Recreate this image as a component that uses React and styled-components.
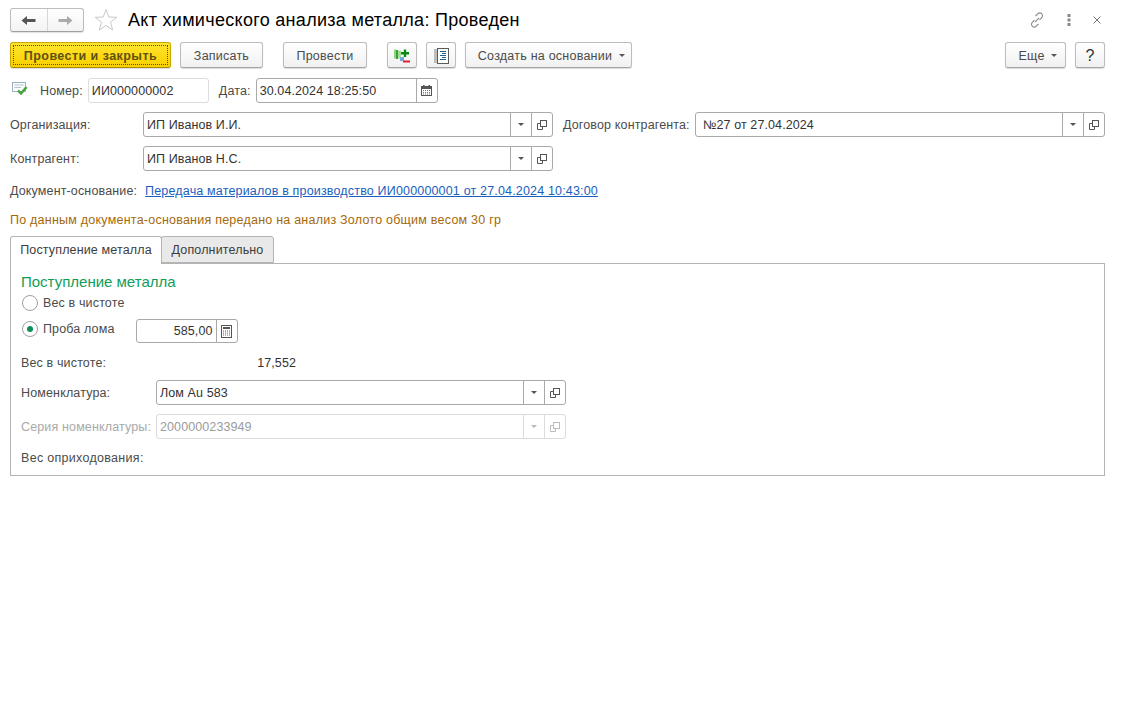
import React from "react";
import styled, { createGlobalStyle } from "styled-components";

const GlobalStyle = createGlobalStyle`
  html, body { margin: 0; padding: 0; background: #fff; }
  body {
    font-family: "Liberation Sans", Arial, sans-serif;
    font-size: 12.5px;
    color: #4b4b4b;
    letter-spacing: 0.23px;
  }
`;

const Page = styled.div`
  width: 1095px;
  padding: 8px 19px 0 10px;
  min-height: 695px;
  position: relative;
`;

const Header = styled.header`
  display: flex;
  align-items: center;
  height: 24px;
`;

const NavGroup = styled.div`
  display: flex;
  width: 74px;
  height: 24px;
  box-sizing: border-box;
  border: 1px solid #bdbdbd;
  border-bottom-color: #a0a0a0;
  border-radius: 3px;
  background: linear-gradient(#fff, #f3f3f3);
  box-shadow: 0 1px 1px rgba(0, 0, 0, 0.12);
`;

const NavCell = styled.div`
  flex: 1;
  display: flex;
  align-items: center;
  justify-content: center;
  & + & { border-left: 1px solid #d6d6d6; }
`;

const StarBox = styled.div`
  display: flex;
  margin-left: 10px;
`;

const Title = styled.h1`
  margin: 1px 0 0 10px;
  font-size: 18px;
  font-weight: 400;
  color: #000;
  letter-spacing: 0.3px;
  white-space: nowrap;
`;

const HeaderTools = styled.div`
  margin-left: auto;
  margin-right: 4px;
  display: flex;
  align-items: center;
  gap: 22px;
`;

const Toolbar = styled.div`
  display: flex;
  height: 26px;
  margin-top: 10px;
`;

const Button = styled.button`
  box-sizing: border-box;
  width: ${(p) => p.$w}px;
  height: 26px;
  margin-left: ${(p) => p.$ml || 0}px;
  padding: 1px 0 0 ${(p) => p.$pl || 0}px;
  display: flex;
  align-items: center;
  justify-content: center;
  font: inherit;
  letter-spacing: inherit;
  color: #4b4b4b;
  border: 1px solid #bcbcbc;
  border-bottom-color: #a4a4a4;
  border-radius: 3px;
  background: linear-gradient(#fff, #f1f1f1);
  box-shadow: 0 1px 1px rgba(0, 0, 0, 0.14);
`;

const PrimaryButton = styled(Button)`
  position: relative;
  font-weight: 700;
  letter-spacing: 0.45px;
  color: #5f5010;
  border-color: #c9a800;
  border-bottom-color: #a88e00;
  background: linear-gradient(#ffe52e, #f9d000);
  &::after {
    content: "";
    position: absolute;
    inset: 2px;
    border: 1px dotted #3a3fa0;
  }
`;

const Caret = styled.span`
  width: 0;
  height: 0;
  margin-left: ${(p) => p.$ml || 0}px;
  border-left: 3px solid transparent;
  border-right: 3px solid transparent;
  border-top: 3px solid ${(p) => (p.$muted ? "#b8b8b8" : "#555")};
`;

const Spacer = styled.div`
  flex: 1;
`;

const HelpMark = styled.span`
  font-size: 16px;
  color: #333;
  letter-spacing: 0;
`;

const Row = styled.div`
  display: flex;
  align-items: center;
  height: ${(p) => p.$h || 25}px;
  margin-top: ${(p) => p.$mt || 0}px;
  white-space: nowrap;
`;

const Label = styled.span`
  width: ${(p) => (p.$w ? `${p.$w}px` : "auto")};
  flex: none;
  margin-left: ${(p) => p.$ml || 0}px;
  letter-spacing: ${(p) => (p.$wide ? 0.3 : 0.14)}px;
  color: ${(p) => (p.$muted ? "#a9a9a9" : "#4b4b4b")};
`;

const FieldBox = styled.div`
  box-sizing: border-box;
  display: flex;
  flex: none;
  width: ${(p) => p.$w}px;
  height: ${(p) => p.$h || 25}px;
  margin-left: ${(p) => p.$ml || 0}px;
  border: 1px solid ${(p) => (p.$light ? "#dcdcdc" : "#a9a9a9")};
  border-radius: 3px;
  background: #fff;
`;

const FieldValue = styled.div`
  flex: 1;
  min-width: 0;
  padding: 0 3px 0 ${(p) => (p.$right ? 0 : p.$inset || 3)}px;
  line-height: ${(p) => (p.$h || 25) - 1}px;
  letter-spacing: 0.1px;
  text-align: ${(p) => (p.$right ? "right" : "left")};
  color: ${(p) => (p.$muted ? "#9b9b9b" : "#333")};
`;

const FieldButton = styled.div`
  box-sizing: border-box;
  flex: none;
  width: ${(p) => p.$w || 21}px;
  display: flex;
  align-items: center;
  justify-content: center;
  border-left: 1px solid ${(p) => (p.$light ? "#dcdcdc" : "#a9a9a9")};
`;

const DocLink = styled.a`
  margin-left: 8px;
  color: #1a5fc0;
  letter-spacing: 0.17px;
  text-decoration: underline;
`;

const Notice = styled.div`
  margin-top: 15px;
  height: 14px;
  line-height: 14px;
  color: #a5690a;
`;

const TabStrip = styled.div`
  display: flex;
  align-items: flex-end;
  height: 28px;
  margin-top: 9px;
  margin-bottom: -1px;
  position: relative;
`;

const Tab = styled.div`
  box-sizing: border-box;
  width: ${(p) => p.$w}px;
  height: ${(p) => (p.$active ? 28 : 27)}px;
  margin-bottom: ${(p) => (p.$active ? 0 : 1)}px;
  margin-left: ${(p) => (p.$active ? 0 : -1)}px;
  padding-top: 6px;
  text-align: center;
  letter-spacing: 0.15px;
  color: #3c3c3c;
  background: ${(p) => (p.$active ? "#fff" : "#e9e9e9")};
  border: 1px solid #b4b4b4;
  border-bottom: ${(p) => (p.$active ? "none" : "1px solid #b4b4b4")};
  border-radius: 3px 3px 0 0;
  position: relative;
  z-index: ${(p) => (p.$active ? 1 : 0)};
`;

const Panel = styled.section`
  box-sizing: border-box;
  height: 213px;
  padding: 9px 10px 0;
  border: 1px solid #b4b4b4;
`;

const PanelHeading = styled.h2`
  margin: 0;
  height: 18px;
  line-height: 18px;
  font-size: 15px;
  font-weight: 400;
  letter-spacing: 0;
  color: #0f9d58;
`;

const RadioRow = styled(Row)`
  color: #4b4b4b;
`;

const RadioMark = styled.span`
  box-sizing: border-box;
  width: 16px;
  height: 16px;
  margin: 0 5px 0 1px;
  flex: none;
  position: relative;
  top: ${(p) => p.$up || 0}px;
  border: 1px solid #a0a0a0;
  border-radius: 50%;
  display: flex;
  align-items: center;
  justify-content: center;
  &::after {
    content: "";
    display: ${(p) => (p.$on ? "block" : "none")};
    width: 6px;
    height: 6px;
    border-radius: 50%;
    background: #0f8f55;
  }
`;

const RadioText = styled.span`
  position: relative;
  top: ${(p) => p.$up || 0}px;
  letter-spacing: 0.14px;
`;

const Amount = styled.span`
  width: 189px;
  text-align: right;
  letter-spacing: 0.1px;
  color: #333;
`;

const StatusBox = styled.div`
  display: flex;
  margin: -4px 0 0 2px;
`;

const ArrowLeft = () => (
  <svg width="15" height="11" viewBox="0 0 15 11">
    <path d="M0.5 5.5 L6 1 V4 H14.5 V7 H6 V10 Z" fill="#555" />
  </svg>
);

const ArrowRight = () => (
  <svg width="15" height="11" viewBox="0 0 15 11">
    <path d="M14.5 5.5 L9 1 V4 H0.5 V7 H9 V10 Z" fill="#aaa" />
  </svg>
);

const Star = () => (
  <svg width="24" height="24" viewBox="0 0 24 24">
    <path
      d="M12 1.5 L14.8 9 L22.8 9.3 L16.5 14.2 L18.7 22 L12 17.5 L5.3 22 L7.5 14.2 L1.2 9.3 L9.2 9 Z"
      fill="#fff"
      stroke="#c9c9c9"
    />
  </svg>
);

const LinkIcon = () => (
  <svg width="16" height="16" viewBox="0 0 16 16" fill="none" stroke="#8a8a8a" strokeWidth="1.1">
    <path d="M6.5 4 L9 1.7 a2.4 2.4 0 0 1 3.9 0.4 a2.4 2.4 0 0 1 0.2 3 L10.6 8" />
    <path d="M9.5 12 L7 14.3 a2.4 2.4 0 0 1 -3.9 -0.4 a2.4 2.4 0 0 1 -0.2 -3 L5.4 8" />
    <path d="M5.8 10.2 L10.2 5.8" />
  </svg>
);

const DotsIcon = () => (
  <svg width="4" height="12" viewBox="0 0 4 12">
    <rect x="0.5" y="0" width="3" height="3" fill="#888" />
    <rect x="0.5" y="4.5" width="3" height="3" fill="#888" />
    <rect x="0.5" y="9" width="3" height="3" fill="#888" />
  </svg>
);

const CloseIcon = () => (
  <svg width="8" height="8" viewBox="0 0 8 8" stroke="#777" strokeWidth="1">
    <path d="M0.5 0.5 L7.5 7.5 M7.5 0.5 L0.5 7.5" />
  </svg>
);

// движения документа: столбики регистра, плюс и минус
const MovementsIcon = () => (
  <svg width="16" height="14" viewBox="0 0 16 14">
    <rect x="0" y="0.5" width="2" height="9" fill="#8ad67a" />
    <rect x="2" y="1" width="2" height="9" fill="#35a535" />
    <rect x="4" y="1.5" width="3" height="8" fill="#a6dc9c" />
    <rect x="6" y="8" width="4" height="4" fill="#7aa6e0" />
    <path d="M7 3 H9.8 V0.5 H12.2 V3 H15 V5.4 H12.2 V8 H9.8 V5.4 H7 Z" fill="#0a8a12" />
    <rect x="9" y="11.5" width="7" height="2" fill="#e01f2d" />
  </svg>
);

const ReportIcon = () => (
  <svg width="15" height="16" viewBox="0 0 15 16">
    <rect x="0" y="1" width="3" height="14" fill="#bdbdbd" />
    <rect x="3.5" y="0.5" width="11" height="15" fill="#fff" stroke="#5a5a5a" />
    <path d="M6 3.5 H12 M8 5.5 H12 M6 7.5 H12 M8 9.5 H12 M6 11.5 H12" stroke="#1f5f8f" strokeWidth="1" />
  </svg>
);

const StatusIcon = () => (
  <svg width="16" height="13" viewBox="0 0 16 13">
    <rect x="0.5" y="0.5" width="13" height="9" fill="#fbfcfe" stroke="#9fb0c2" />
    <path d="M2.5 3 H11.5 M2.5 5.5 H9" stroke="#b4c2d0" />
    <path d="M6 8.5 L9 11.5 L14.5 5" fill="none" stroke="#3fa535" strokeWidth="2.4" />
  </svg>
);

const CalendarIcon = () => (
  <svg width="11" height="11" viewBox="0 0 11 11">
    <rect x="0.5" y="1.5" width="10" height="9" fill="#fff" stroke="#555" />
    <rect x="0.5" y="1.5" width="10" height="2.5" fill="#555" />
    <rect x="2" y="0" width="1.5" height="2" fill="#555" />
    <rect x="7.5" y="0" width="1.5" height="2" fill="#555" />
    <path d="M2 5.5 H9 M2 7.5 H9 M2 9 H9" stroke="#777" strokeDasharray="1 1" />
  </svg>
);

const CalcIcon = () => (
  <svg width="11" height="13" viewBox="0 0 11 13">
    <rect x="0.5" y="0.5" width="10" height="12" fill="#fff" stroke="#555" />
    <rect x="2" y="2" width="7" height="2" fill="#555" />
    <path d="M2 6 H9 M2 8 H9 M2 10 H9" stroke="#666" strokeDasharray="1 1" />
  </svg>
);

const OpenIcon = ({ light }) => (
  <svg width="10" height="10" viewBox="0 0 10 10" fill="none" stroke={light ? "#bdbdbd" : "#555"}>
    <rect x="3.5" y="0.5" width="6" height="6" />
    <path d="M3 3.5 H0.5 V9.5 H5.5 V7" />
  </svg>
);

// поле ввода с кнопками выбора и открытия
const SelectField = ({ value, w, ml, light, inset }) => (
  <FieldBox $w={w} $ml={ml} $light={light}>
    <FieldValue $muted={light} $inset={inset}>{value}</FieldValue>
    <FieldButton $light={light}><Caret $muted={light} /></FieldButton>
    <FieldButton $light={light}><OpenIcon light={light} /></FieldButton>
  </FieldBox>
);

export default function App() {
  return (
    <Page>
      <GlobalStyle />
      <Header>
        <NavGroup>
          <NavCell><ArrowLeft /></NavCell>
          <NavCell><ArrowRight /></NavCell>
        </NavGroup>
        <StarBox><Star /></StarBox>
        <Title>Акт химического анализа металла: Проведен</Title>
        <HeaderTools>
          <LinkIcon />
          <DotsIcon />
          <CloseIcon />
        </HeaderTools>
      </Header>

      <Toolbar>
        <PrimaryButton $w={161}>Провести и закрыть</PrimaryButton>
        <Button $w={83} $ml={9}>Записать</Button>
        <Button $w={84} $ml={20}>Провести</Button>
        <Button $w={30} $ml={20}><MovementsIcon /></Button>
        <Button $w={30} $ml={9}><ReportIcon /></Button>
        <Button $w={167} $ml={9} $pl={6}>Создать на основании<Caret $ml={7} /></Button>
        <Spacer />
        <Button $w={61} $pl={4}>Еще<Caret $ml={6} /></Button>
        <Button $w={30} $ml={9}><HelpMark>?</HelpMark></Button>
      </Toolbar>

      <Row $mt={10}>
        <StatusBox><StatusIcon /></StatusBox>
        <Label $ml={12}>Номер:</Label>
        <FieldBox $w={121} $ml={5} $light>
          <FieldValue>ИИ000000002</FieldValue>
        </FieldBox>
        <Label $ml={10}>Дата:</Label>
        <FieldBox $w={182} $ml={5}>
          <FieldValue>30.04.2024 18:25:50</FieldValue>
          <FieldButton><CalendarIcon /></FieldButton>
        </FieldBox>
      </Row>

      <Row $mt={9}>
        <Label $w={133}>Организация:</Label>
        <SelectField value="ИП Иванов И.И." w={410} />
        <Label $ml={10} $w={132}>Договор контрагента:</Label>
        <SelectField value="№27 от 27.04.2024" w={410} inset={7} />
      </Row>

      <Row $mt={9}>
        <Label $w={133}>Контрагент:</Label>
        <SelectField value="ИП Иванов Н.С." w={410} />
      </Row>

      <Row $mt={13} $h={14}>
        <Label>Документ-основание:</Label>
        <DocLink>Передача материалов в производство ИИ000000001 от 27.04.2024 10:43:00</DocLink>
      </Row>

      <Notice>По данным документа-основания передано на анализ Золото общим весом 30 гр</Notice>

      <TabStrip>
        <Tab $active $w={152}>Поступление металла</Tab>
        <Tab $w={113}>Дополнительно</Tab>
      </TabStrip>

      <Panel>
        <PanelHeading>Поступление металла</PanelHeading>
        <RadioRow $h={16} $mt={4}>
          <RadioMark />
          <RadioText>Вес в чистоте</RadioText>
        </RadioRow>
        <RadioRow $h={24} $mt={8}>
          <RadioMark $on $up={-2} />
          <RadioText $up={-2}>Проба лома</RadioText>
          <FieldBox $w={102} $h={24} $ml={21}>
            <FieldValue $right $h={24}>585,00</FieldValue>
            <FieldButton><CalcIcon /></FieldButton>
          </FieldBox>
        </RadioRow>
        <Row $h={14} $mt={13}>
          <Label $w={86}>Вес в чистоте:</Label>
          <Amount>17,552</Amount>
        </Row>
        <Row $mt={10}>
          <Label $w={135}>Номенклатура:</Label>
          <SelectField value="Лом Au 583" w={410} />
        </Row>
        <Row $mt={9}>
          <Label $w={135} $muted>Серия номенклатуры:</Label>
          <SelectField value="2000000233949" w={410} light />
        </Row>
        <Row $h={14} $mt={12}>
          <Label $wide>Вес оприходования:</Label>
        </Row>
      </Panel>
    </Page>
  );
}
